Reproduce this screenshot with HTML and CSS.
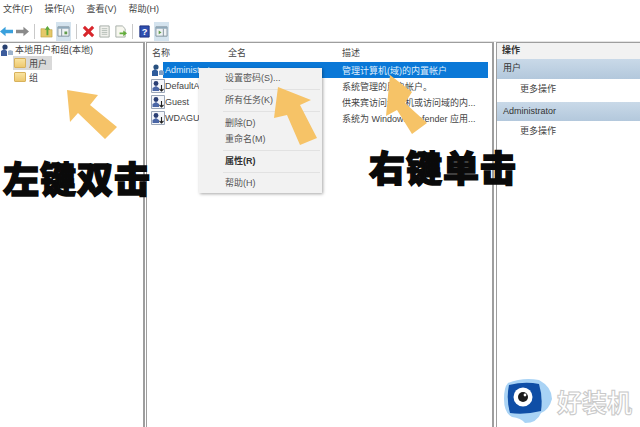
FILE: index.html
```html
<!DOCTYPE html>
<html lang="zh">
<head>
<meta charset="utf-8">
<title>本地用户和组</title>
<link rel="stylesheet" href="styles.css">
</head>
<body>
<div class="app">
  <nav class="menubar">
    <span>文件(F)</span><span>操作(A)</span><span>查看(V)</span><span>帮助(H)</span>
  </nav>
  <div class="toolbar">
    <svg class="tool" viewBox="0 0 14 14"><path d="M0 7 6 2v3h8v4H6v3z" fill="#3aa0dc"/></svg>
    <svg class="tool" viewBox="0 0 14 14"><path d="M14 7 8 2v3H0v4h8v3z" fill="#8a8a8a"/></svg>
    <i class="sep"></i>
    <svg class="tool" viewBox="0 0 14 14"><path d="M1 4h4l1 1h7v8H1z" fill="#e5c869" stroke="#b89a3c" stroke-width=".6"/><path d="M7 11V5H5l3-4 3 4H9v6z" fill="#5fa83a"/></svg>
    <span class="tool-on"><svg class="tool" viewBox="0 0 14 14"><path d="M1 2h12v10H1z" fill="#eef2f4" stroke="#7f919c"/><path d="M1 2h12v2H1z" fill="#8fa9ba"/><path d="M5 4v8" stroke="#7f919c"/><path d="M8 7h3v3H8z" fill="#5f9a4a"/></svg></span>
    <i class="sep"></i>
    <svg class="tool" viewBox="0 0 14 14"><path d="M2 2l10 10M12 2 2 12" stroke="#d8262c" stroke-width="3.200"/></svg>
    <svg class="tool" viewBox="0 0 14 14"><path d="M2 1h10v12H2z" fill="#f2f2ee" stroke="#a3aca5"/><path d="M4 4h6M4 6h6M4 8h6M4 10h6" stroke="#b3bcb5"/></svg>
    <svg class="tool" viewBox="0 0 14 14"><path d="M2 1h7l3 3v9H2z" fill="#f7f7ef" stroke="#a3aca5"/><path d="M6 8h4V6l4 3-4 3v-2H6z" fill="#63ad3c"/></svg>
    <i class="sep"></i>
    <svg class="tool" viewBox="0 0 14 14"><path d="M2 1h10v12H2z" fill="#2f4fb0" stroke="#1d2f7c"/><text x="7" y="11" class="help-q">?</text></svg>
    <span class="tool-on"><svg class="tool" viewBox="0 0 14 14"><path d="M1 2h12v10H1z" fill="#eef2f4" stroke="#7f919c"/><path d="M1 2h12v2H1z" fill="#8fa9ba"/><path d="M9 4v8" stroke="#7f919c"/><path d="M4 6l3 2-3 2z" fill="#5f9a4a"/></svg></span>
  </div>
  <main class="panes">
    <section class="pane tree">
      <div class="tree-root">
        <svg class="user-icon" viewBox="0 0 14 14"><path d="M1 13V8l3-2 3 2v5z" fill="#3c5c9c"/><circle cx="5" cy="4" r="2.600" fill="#28406f"/><path d="M8 12V8l2-1 3 1v4z" fill="#9db2cc"/></svg>
        <span>本地用户和组(本地)</span>
      </div>
      <div class="tree-item selected"><i class="folder"></i><span>用户</span></div>
      <div class="tree-item"><i class="folder"></i><span>组</span></div>
    </section>
    <section class="pane list">
      <div class="row head"><span class="c-name">名称</span><span class="c-full">全名</span><span class="c-desc">描述</span></div>
      <div class="row active">
        <svg class="user-icon" viewBox="0 0 14 14"><path d="M1 13V8l3-2 3 2v5z" fill="#2f5c9c"/><circle cx="5" cy="4" r="2.600" fill="#28507f"/><path d="M8 12V8l2-1 3 1v4z" fill="#7f9fc4"/></svg>
        <span class="c-name">Administrator</span><span class="c-full"></span><span class="c-desc">管理计算机(域)的内置帐户</span>
      </div>
      <div class="row">
        <svg class="user-icon" viewBox="0 0 14 14"><use href="#u"/></svg>
        <span class="c-name">DefaultAccount</span><span class="c-full"></span><span class="c-desc">系统管理的用户帐户。</span>
      </div>
      <div class="row">
        <svg class="user-icon" viewBox="0 0 14 14"><use href="#u"/></svg>
        <span class="c-name">Guest</span><span class="c-full"></span><span class="c-desc">供来宾访问计算机或访问域的内...</span>
      </div>
      <div class="row">
        <svg class="user-icon" viewBox="0 0 14 14"><use href="#u"/></svg>
        <span class="c-name">WDAGUtilityAccount</span><span class="c-full"></span><span class="c-desc">系统为 Windows Defender 应用...</span>
      </div>
    </section>
    <aside class="pane actions">
      <div class="act-title">操作</div>
      <div class="act-group">用户</div>
      <div class="act-item">更多操作</div>
      <div class="act-group second">Administrator</div>
      <div class="act-item">更多操作</div>
    </aside>
  </main>
</div>

<svg class="defs" width="0" height="0"><defs><g id="u"><path d="M.5.5h13v13H.5z" fill="#f4f6fa" stroke="#9aa6b8"/><circle cx="5" cy="4.500" r="2.400" fill="#2b3f74"/><path d="M1.500 12V9l3.500-2 3 2v3z" fill="#4a66a6"/><path d="M10.500 6v6M8.500 10l2 2 2-2" fill="none" stroke="#222" stroke-width="1.100"/></g></defs></svg>

<div class="context-menu">
  <div class="cm-item">设置密码(S)...</div>
  <hr>
  <div class="cm-item">所有任务(K)</div>
  <hr>
  <div class="cm-item tight">删除(D)</div>
  <div class="cm-item tight">重命名(M)</div>
  <hr>
  <div class="cm-item strong">属性(R)</div>
  <hr>
  <div class="cm-item">帮助(H)</div>
</div>

<svg class="overlay" viewBox="0 0 640 427" width="640" height="427">
  <g fill="#f6c367">
    <path d="M67 90 98 95 90 105 117 127 105 139 78 113 70 122z"/>
    <path d="M278 87 311 100 300 105 317 138 300 145 287 115 274 118z"/>
    <path d="M390 75 412 92 405 103 427 123 412 134 397 110 386 116z"/>
  </g>
</svg>

<div class="caption left">左键双击</div>
<div class="caption right">右键单击</div>

<div class="mark">
  <svg class="mark-logo" viewBox="0 0 50 48">
    <path d="M5 6 Q20 0 36 3 Q49 10 49 22 Q46 33 38 36 Q34 46 22 46 Q18 41 9 40 Q1 36 1 22 Q1 10 5 6z" fill="#a9d3f5"/>
    <path d="M6 8 Q22 4 36 7 Q40 20 38 34 Q22 38 7 36 Q3 22 6 8z" fill="#0f4ea6"/>
    <circle cx="20" cy="20" r="9.500" fill="#fff"/>
    <circle cx="20" cy="20" r="5" fill="#1b1b1b"/>
    <circle cx="22" cy="18" r="1.400" fill="#fff"/>
  </svg>
  <span class="mark-text">好装机</span>
</div>
</body>
</html>
```
FILE: styles.css
```css
* { box-sizing: border-box; }
html, body { margin: 0; padding: 0; }
body {
  width: 640px;
  height: 427px;
  overflow: hidden;
  position: relative;
  background: #fff;
  font-family: "Liberation Sans", "Noto Sans CJK SC", sans-serif;
  font-size: 9px;
  color: #333;
}
.app { display: flex; flex-direction: column; height: 427px; }
.menubar {
  height: 21px;
  display: flex;
  gap: 12px;
  padding: 0 0 4px 3px;
  align-items: center;
  color: #444;
}
.toolbar {
  height: 21px;
  display: flex;
  align-items: center;
  gap: 3px;
  border-bottom: 1px solid #e4e4e4;
}
.tool { width: 13px; height: 13px; display: block; }
.tool-on { background: #d4e3ee; padding: 3px 1px; display: block; }
.sep { width: 1px; height: 15px; background: #c9c9c9; margin: 0 2px; }
.help-q { font: bold 10px "Liberation Sans", sans-serif; fill: #fff; text-anchor: middle; }
.panes {
  flex: 1;
  display: flex;
  gap: 1px;
  min-height: 0;
  background: #fff;
}
.pane {
  border: solid #9e9e9e;
  border-width: 1px 2px 0 1px;
  background: #fff;
}
.tree { width: 145px; border-left: 0; }
.list { width: 348px; }
.actions { flex: 1; border-right: 0; margin-left: 1px; }
.user-icon { width: 14px; height: 14px; flex: none; display: block; }
.tree-root { display: flex; align-items: center; gap: 1px; height: 13px; color: #444; }
.tree-item {
  display: flex;
  align-items: center;
  gap: 3px;
  height: 14px;
  margin-left: 13px;
  width: 39px;
  color: #444;
}
.tree-item.selected { background: #d9d9d9; }
.folder {
  width: 12px;
  height: 10px;
  margin-left: 1px;
  flex: none;
  background: linear-gradient(#f9e3a0, #eec970);
  border: 1px solid #d8b25c;
  border-radius: 1px;
}
.row {
  display: flex;
  align-items: center;
  height: 16px;
  padding-left: 4px;
  color: #444;
}
.row.head { height: 19px; padding-left: 5px; }
.row.head .c-name { width: 76px; }
.row.head .c-full { width: 114px; }
.row .c-name { width: 34px; flex: none; white-space: nowrap; }
.row .c-full { width: 143px; flex: none; }
.row .c-desc { white-space: nowrap; }
.row.active { background: linear-gradient(to right, transparent 16px, #0a78d7 16px, #0a78d7 341px, transparent 341px); color: #dfeefc; }
.act-title {
  height: 16px;
  font-weight: 700;
  padding-left: 5px;
  line-height: 14px;
  background: #f2f2f2;
  color: #333;
}
.act-group {
  height: 20px;
  line-height: 19px;
  padding-left: 6px;
  background: linear-gradient(#c9d9e8, #b3c8dc);
  color: #333;
}
.act-group.second { height: 19px; }
.act-item { height: 23px; line-height: 20px; padding-left: 23px; color: #444; }
.context-menu {
  position: absolute;
  left: 199px;
  top: 68px;
  width: 123px;
  height: 125px;
  padding: 3px 2px 0 26px;
  background: #f2f2f2;
  box-shadow: 1px 1px 3px rgba(0, 0, 0, .35);
  color: #555;
}
.context-menu hr { border: 0; border-top: 1px solid #e2e2e2; margin: 3px 0 3px -2px; }
.cm-item { height: 15px; line-height: 15px; }
.cm-item.tight { height: 16px; line-height: 16px; }
.cm-item.strong { font-weight: 700; color: #333; }
.overlay { position: absolute; left: 0; top: 0; pointer-events: none; }
.caption {
  position: absolute;
  font-family: "Noto Sans CJK SC", sans-serif;
  font-weight: 900;
  font-size: 36px;
  line-height: 40px;
  letter-spacing: 1px;
  color: #0a0a0a;
  -webkit-text-stroke: 1.500px #0a0a0a;
  white-space: nowrap;
}
.caption.left { left: 3px; top: 157px; }
.caption.right { left: 369px; top: 146px; }
.mark { position: absolute; left: 503px; top: 377px; display: flex; align-items: center; gap: 4px; }
.mark-logo { width: 50px; height: 48px; display: block; }
.mark-text {
  font-family: "Noto Sans CJK SC", sans-serif;
  font-size: 25px;
  line-height: 30px;
  font-weight: 700;
  color: #fff;
  -webkit-text-stroke: 1px #c9c9c9;
  white-space: nowrap;
}
.defs { position: absolute; }
```
